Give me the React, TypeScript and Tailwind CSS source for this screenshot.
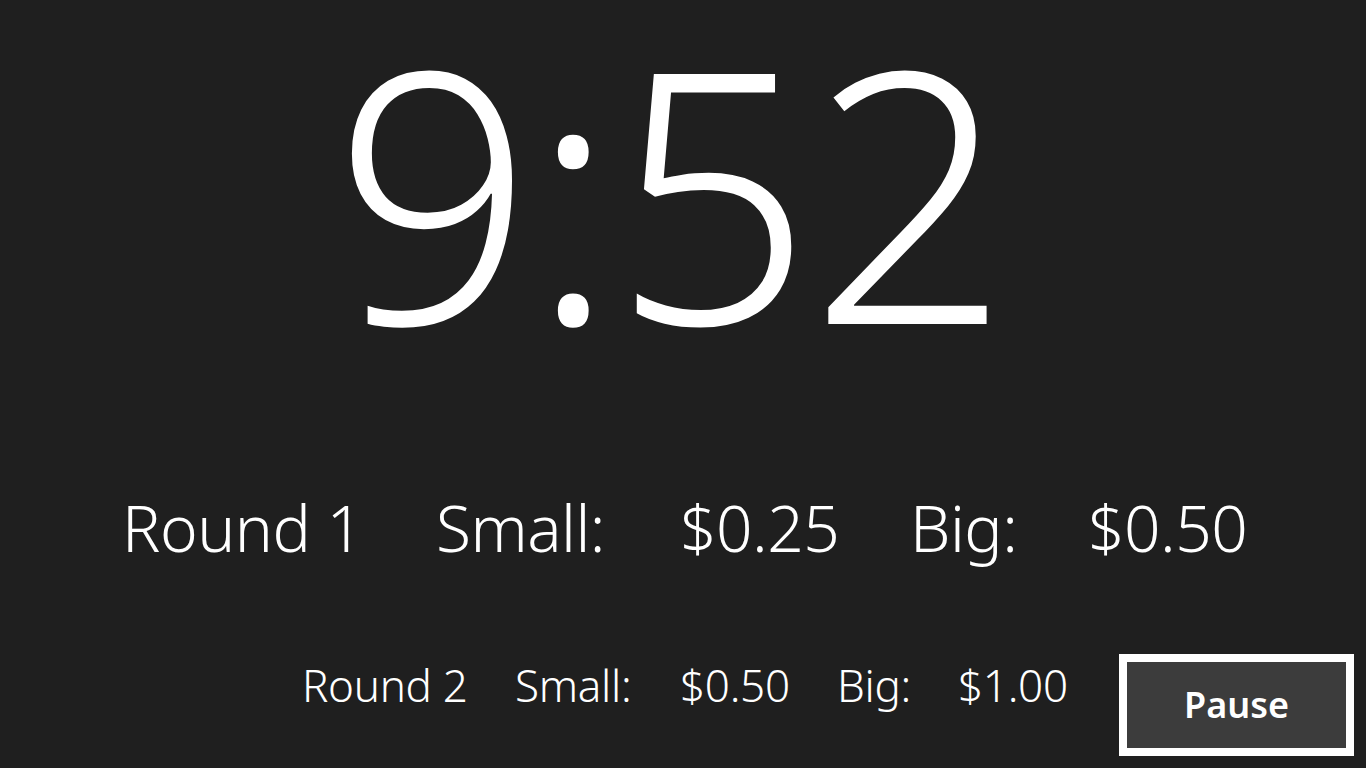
import React from 'react';

const font = { fontFamily: '"Noto Sans", "Open Sans", sans-serif' };

export default function App() {
  return (
    <div className="flex h-[768px] w-[1366px] flex-col overflow-hidden bg-[#1f1f1f] text-white" style={font}>
      <div className="pt-[14px] pr-[26px] text-center text-[350px] font-[350] leading-none tracking-[-3px]">9:52</div>

      <div className="mt-[132px] grid grid-cols-[314px_244px_230px_178px_auto] pl-[122px] text-[64px] font-[350] leading-none tracking-[-0.5px]">
        <span>Round 1</span>
        <span>Small:</span>
        <span>$0.25</span>
        <span>Big:</span>
        <span>$0.50</span>
      </div>

      <div className="mt-auto flex items-center pb-[12px] pl-[302px]">
        <div className="mb-[40px] grid grid-cols-[213px_165px_157px_121px_161px] text-[44px] font-[350] leading-none tracking-[-0.3px]">
          <span>Round 2</span>
          <span>Small:</span>
          <span>$0.50</span>
          <span>Big:</span>
          <span>$1.00</span>
        </div>
        <button className="flex h-[102px] w-[235px] items-center justify-center border-[8px] border-white bg-[#3c3c3c] text-[36px] font-semibold text-white">
          Pause
        </button>
      </div>
    </div>
  );
}
